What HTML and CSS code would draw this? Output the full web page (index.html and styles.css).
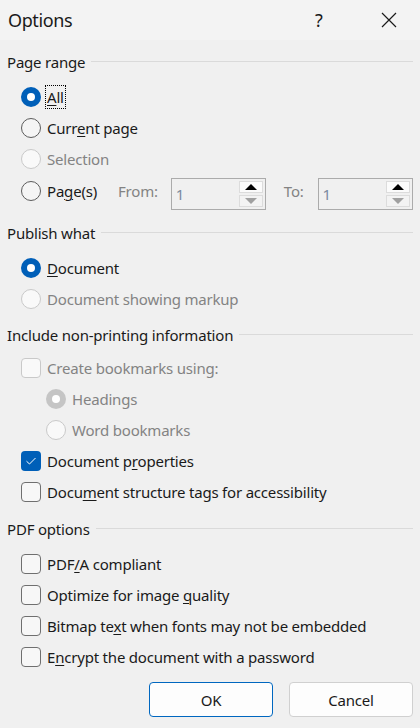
FILE: index.html
```html
<!DOCTYPE html>
<html>
<head>
<meta charset="utf-8">
<link rel="stylesheet" href="styles.css">
</head>
<body>
<div class="dialog">
  <div class="titlebar">
    <span class="title">Options</span>
    <span class="help">?</span>
    <span class="close"><svg width="16" height="16" viewBox="0 0 16 16"><path d="M1 1 L15 15 M15 1 L1 15" stroke="#1a1a1a" stroke-width="1.2" fill="none"/></svg></span>
  </div>
  <div class="content">
    <div class="header h1">Page range</div>
    <div class="row"><span class="radio on"></span><span class="label focus"><u>A</u>ll</span></div>
    <div class="row"><span class="radio"></span><span class="label">Curr<u>e</u>nt page</span></div>
    <div class="row disabled"><span class="radio"></span><span class="label">Selection</span></div>
    <div class="row pages">
      <span class="radio"></span><span class="label pl">Pa<u>g</u>e(s)</span>
      <span class="flabel">From:</span>
      <span class="spin"><span class="val">1</span><span class="btns"><span class="sb up"><span class="tri"></span></span><span class="sb down"><span class="tri"></span></span></span></span>
      <span class="flabel to">To:</span>
      <span class="spin"><span class="val">1</span><span class="btns"><span class="sb up"><span class="tri"></span></span><span class="sb down"><span class="tri"></span></span></span></span>
    </div>
    <div class="header h2">Publish what</div>
    <div class="row"><span class="radio on"></span><span class="label"><u>D</u>ocument</span></div>
    <div class="row disabled"><span class="radio"></span><span class="label">Document showing markup</span></div>
    <div class="header h3">Include non-printing information</div>
    <div class="row disabled"><span class="check"></span><span class="label">Create bookmarks using:</span></div>
    <div class="row disabled indent"><span class="radio on"></span><span class="label">Headings</span></div>
    <div class="row disabled indent"><span class="radio"></span><span class="label">Word bookmarks</span></div>
    <div class="row"><span class="check on"><svg width="12" height="10" viewBox="0 0 12 10"><path d="M1.5 5.2 L4.5 8 L10.5 2" stroke="#fff" stroke-width="1" fill="none"/></svg></span><span class="label">Document p<u>r</u>operties</span></div>
    <div class="row"><span class="check"></span><span class="label">Docu<u>m</u>ent structure tags for accessibility</span></div>
    <div class="header h4">PDF options</div>
    <div class="row"><span class="check"></span><span class="label">PDF<u>/</u>A compliant</span></div>
    <div class="row"><span class="check"></span><span class="label">Optimize for image <u>q</u>uality</span></div>
    <div class="row"><span class="check"></span><span class="label">Bitmap te<u>x</u>t when fonts may not be embedded</span></div>
    <div class="row"><span class="check"></span><span class="label">E<u>n</u>crypt the document with a password</span></div>
    <div class="buttons">
      <button class="btn primary">OK</button>
      <button class="btn">Cancel</button>
    </div>
  </div>
</div>
</body>
</html>
```
FILE: styles.css
```css
html, body {
  margin: 0;
  padding: 0;
  background: #f0f0f0;
}
body {
  font-family: "Noto Sans", "Open Sans", sans-serif;
  font-size: 15px;
  letter-spacing: -0.2px;
  color: #1a1a1a;
  width: 420px;
  height: 728px;
  overflow: hidden;
}
.titlebar {
  height: 40px;
  background: #f3f3f3;
  display: flex;
  align-items: center;
}
.title {
  font-size: 18px;
  letter-spacing: -0.4px;
  margin-left: 8px;
  flex: 1;
}
.help {
  font-size: 18px;
  width: 16px;
  margin-right: 50px;
}
.close {
  width: 16px;
  height: 16px;
  margin-right: 23px;
  display: flex;
}
.content {
  display: flex;
  flex-direction: column;
  padding: 0 7px 0 7px;
}
.header {
  height: 24px;
  display: flex;
  align-items: center;
  gap: 6px;
  margin-bottom: 7px;
}
.header::after {
  content: "";
  flex: 1;
  height: 1px;
  background: #dadada;
  margin-top: -2px;
}
.h1 { margin-top: 10px; }
.h2 { margin-top: 13px; }
.h3 { margin-top: 9px; margin-bottom: 5px; }
.h4 { margin-top: 10px; }
.row {
  height: 31px;
  display: flex;
  align-items: center;
  padding-left: 14px;
}
.row.indent { padding-left: 39px; }
.row.pages { height: 34px; }
.label {
  margin-left: 4px;
  padding: 1px 1px;
  border: 1px dotted transparent;
}
.label.focus { border-color: #000; }
.disabled .label { color: #838383; }
u { text-decoration-thickness: 1px; text-underline-offset: 2px; }
.radio {
  width: 20px;
  height: 20px;
  box-sizing: border-box;
  border-radius: 50%;
  border: 1px solid #5c5c5c;
  background: #f5f5f5;
  flex: none;
  position: relative;
}
.radio.on {
  border: none;
  background: #005fb8;
}
.radio.on::after {
  content: "";
  position: absolute;
  left: 6px;
  top: 6px;
  width: 8px;
  height: 8px;
  border-radius: 50%;
  background: #fff;
}
.disabled .radio {
  border-color: #c9c9c9;
  background: #f9f9f9;
}
.disabled .radio.on {
  background: #c5c5c5;
}
.check {
  width: 20px;
  height: 20px;
  box-sizing: border-box;
  border-radius: 4px;
  border: 1px solid #6f6f6f;
  background: #f7f7f7;
  flex: none;
  display: flex;
  align-items: center;
  justify-content: center;
}
.check.on {
  border: none;
  background: #005fb8;
}
.disabled .check {
  border-color: #c9c9c9;
  background: #f9f9f9;
}
.flabel {
  color: #838383;
  margin-left: 19px;
}
.flabel.to { margin-left: 18px; }
.spin {
  margin-left: 13px;
  width: 95px;
  height: 32px;
  box-sizing: border-box;
  border: 1px solid #ababab;
  display: flex;
  align-items: center;
  margin-top: 5px;
}
.pages .flabel.to + .spin { margin-left: 14px; }
.val {
  flex: 1;
  color: #7a8aa0;
  padding-left: 4px;
}
.btns {
  display: flex;
  flex-direction: column;
  gap: 2px;
  margin-right: 2px;
}
.sb {
  width: 24px;
  height: 12px;
  box-sizing: border-box;
  background: #fbfbfb;
  border: 1px solid #dcdcdc;
  display: flex;
  align-items: center;
  justify-content: center;
}
.sb.down { background: #f3f3f3; }
.tri {
  width: 0;
  height: 0;
  border-left: 6px solid transparent;
  border-right: 6px solid transparent;
}
.up .tri { border-bottom: 6px solid #000; }
.down .tri { border-top: 6px solid #a0a0a0; }
.buttons {
  display: flex;
  justify-content: flex-end;
  gap: 16px;
  margin-top: 10px;
}
.btn {
  width: 124px;
  height: 35px;
  box-sizing: border-box;
  border: 1px solid #d0d0d0;
  border-radius: 4px;
  background: #fdfdfd;
  font-family: inherit;
  font-size: 15px;
  letter-spacing: -0.2px;
  color: #1a1a1a;
}
.btn.primary { border-color: #0067c0; }
```
